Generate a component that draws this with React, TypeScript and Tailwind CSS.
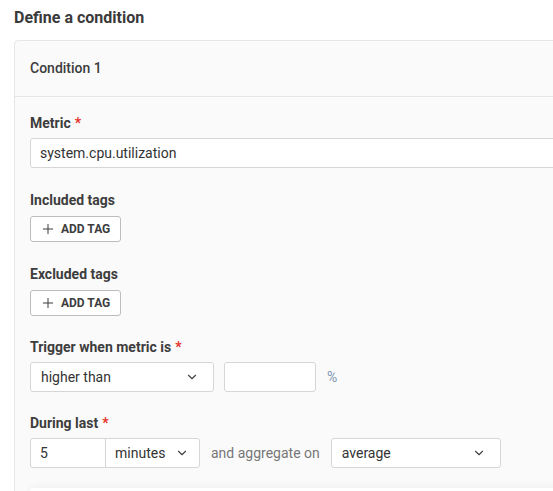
import { Plus, ChevronDown } from "lucide-react";

function Label({ text, required }: { text: string; required?: boolean }) {
  return (
    <p className="text-[14px] leading-4 font-bold text-[#3d3d3d]">
      {text}
      {required && <span className="text-[#e5332a] ml-1">*</span>}
    </p>
  );
}

function AddTag() {
  return (
    <button className="mt-[8px] h-[26px] w-[91px] flex items-center gap-[5px] pl-[9px] border border-[#bdbdbd] rounded-[3px] bg-white text-[12px] leading-none font-bold text-[#3d3d3d]">
      <Plus size={16} strokeWidth={1.5} />
      ADD TAG
    </button>
  );
}

function Select({ value, width }: { value: string; width: string }) {
  return (
    <div className={`${width} h-[30px] flex items-center justify-between pl-[10px] pr-[14px] bg-white border border-[#d6d6d6] rounded-[3px] text-[14px] text-[#333]`}>
      <span>{value}</span>
      <ChevronDown size={14} strokeWidth={2} className="text-[#444]" />
    </div>
  );
}

export default function App() {
  return (
    <div className="w-[553px] h-[491px] overflow-hidden bg-white font-['Roboto',sans-serif]">
      <div className="pl-[14px] pt-[8px]">
        <h2 className="text-[16px] leading-5 font-bold text-[#3a3a3a]">Define a condition</h2>

        <div className="mt-[12px] w-[620px] bg-[#fafafa] border border-[#e6e6e6] rounded-tl-[4px]">
          <div className="h-[56px] flex items-center pl-[15px] border-b border-[#e6e6e6]">
            <span className="text-[14px] font-medium text-[#3d3d3d]">Condition 1</span>
          </div>

          <div className="pl-[15px] pt-[18px]">
            <Label text="Metric" required />
            <div className="mt-[7px] h-[30px] w-[600px] flex items-center pl-[9px] bg-white border border-[#d6d6d6] rounded-[3px] text-[14px] text-[#333]">
              system.cpu.utilization
            </div>

            <div className="mt-[24px]">
              <Label text="Included tags" />
              <AddTag />
            </div>

            <div className="mt-[24px]">
              <Label text="Excluded tags" />
              <AddTag />
            </div>

            <div className="mt-[23px]">
              <Label text="Trigger when metric is" required />
              <div className="mt-[7px] flex items-center">
                <Select value="higher than" width="w-[184px]" />
                <div className="ml-[10px] w-[92px] h-[30px] bg-white border border-[#d6d6d6] rounded-[3px]" />
                <span className="ml-[11px] text-[14px] text-[#7d98b3]">%</span>
              </div>
            </div>

            <div className="mt-[23px]">
              <Label text="During last" required />
              <div className="mt-[7px] flex items-center">
                <div className="flex h-[30px] w-[170px] bg-white border border-[#d6d6d6] rounded-[3px] text-[14px] text-[#333]">
                  <div className="w-[75px] flex items-center pl-[9px] border-r border-[#d6d6d6]">5</div>
                  <div className="flex-1 flex items-center justify-between pl-[9px] pr-[10px]">
                    <span>minutes</span>
                    <ChevronDown size={14} strokeWidth={2} className="text-[#444]" />
                  </div>
                </div>
                <span className="ml-[11px] text-[14px] text-[#777]">and aggregate on</span>
                <div className="ml-[11px]">
                  <Select value="average" width="w-[170px]" />
                </div>
              </div>
            </div>

            <div className="mt-[20px] h-[40px] w-[600px] bg-white rounded-[3px] shadow-[0_-2px_8px_rgba(0,0,0,0.04)]" />
          </div>
        </div>
      </div>
    </div>
  );
}
